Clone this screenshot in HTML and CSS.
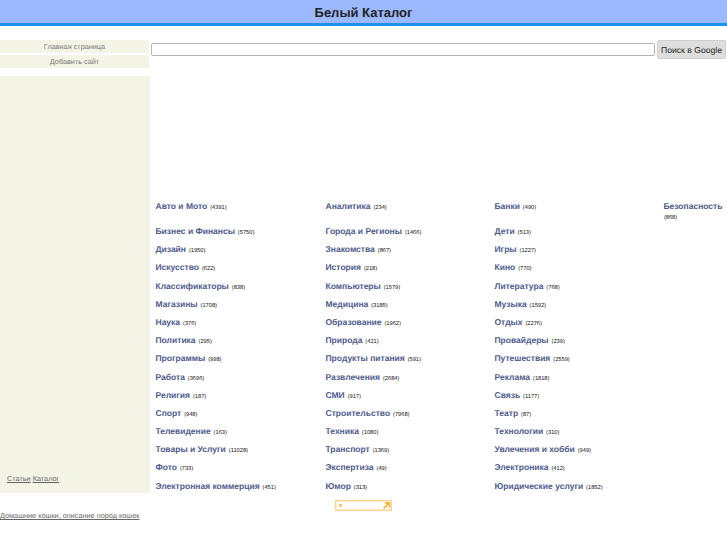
FILE: index.html
```html
<!DOCTYPE html>
<html lang="ru">
<head>
<meta charset="utf-8">
<title>Белый Каталог</title>
<link rel="stylesheet" href="styles.css">
</head>
<body>
<header class="top"><h1 class="title">Белый Каталог</h1></header>
<div class="main">
  <aside class="side">
    <nav class="nav">
      <a class="nav-item" href="#">Главная страница</a>
      <a class="nav-item" href="#">Добавить сайт</a>
    </nav>
    <div class="panel">
      <div class="panel-links"><a href="#">Статьи</a> <a href="#">Каталог</a></div>
    </div>
  </aside>
  <div class="content">
    <form class="search">
      <input class="search-input" type="text">
      <button class="search-btn" type="button">Поиск в Google</button>
    </form>
    <div class="cats">
      <div class="cat"><a href="#">Авто и Мото</a> <small>(4391)</small></div>
      <div class="cat"><a href="#">Аналитика</a> <small>(234)</small></div>
      <div class="cat"><a href="#">Банки</a> <small>(490)</small></div>
      <div class="cat"><a href="#">Безопасность</a> <small>(868)</small></div>
      <div class="cat"><a href="#">Бизнес и Финансы</a> <small>(5750)</small></div>
      <div class="cat"><a href="#">Города и Регионы</a> <small>(1466)</small></div>
      <div class="cat"><a href="#">Дети</a> <small>(513)</small></div><div></div>
      <div class="cat"><a href="#">Дизайн</a> <small>(1950)</small></div>
      <div class="cat"><a href="#">Знакомства</a> <small>(867)</small></div>
      <div class="cat"><a href="#">Игры</a> <small>(1227)</small></div><div></div>
      <div class="cat"><a href="#">Искусство</a> <small>(622)</small></div>
      <div class="cat"><a href="#">История</a> <small>(218)</small></div>
      <div class="cat"><a href="#">Кино</a> <small>(770)</small></div><div></div>
      <div class="cat"><a href="#">Классификаторы</a> <small>(838)</small></div>
      <div class="cat"><a href="#">Компьютеры</a> <small>(1579)</small></div>
      <div class="cat"><a href="#">Литература</a> <small>(768)</small></div><div></div>
      <div class="cat"><a href="#">Магазины</a> <small>(1708)</small></div>
      <div class="cat"><a href="#">Медицина</a> <small>(3185)</small></div>
      <div class="cat"><a href="#">Музыка</a> <small>(1592)</small></div><div></div>
      <div class="cat"><a href="#">Наука</a> <small>(376)</small></div>
      <div class="cat"><a href="#">Образование</a> <small>(1962)</small></div>
      <div class="cat"><a href="#">Отдых</a> <small>(2276)</small></div><div></div>
      <div class="cat"><a href="#">Политика</a> <small>(295)</small></div>
      <div class="cat"><a href="#">Природа</a> <small>(421)</small></div>
      <div class="cat"><a href="#">Провайдеры</a> <small>(239)</small></div><div></div>
      <div class="cat"><a href="#">Программы</a> <small>(998)</small></div>
      <div class="cat"><a href="#">Продукты питания</a> <small>(591)</small></div>
      <div class="cat"><a href="#">Путешествия</a> <small>(2559)</small></div><div></div>
      <div class="cat"><a href="#">Работа</a> <small>(3696)</small></div>
      <div class="cat"><a href="#">Развлечения</a> <small>(2684)</small></div>
      <div class="cat"><a href="#">Реклама</a> <small>(1818)</small></div><div></div>
      <div class="cat"><a href="#">Религия</a> <small>(187)</small></div>
      <div class="cat"><a href="#">СМИ</a> <small>(917)</small></div>
      <div class="cat"><a href="#">Связь</a> <small>(1177)</small></div><div></div>
      <div class="cat"><a href="#">Спорт</a> <small>(948)</small></div>
      <div class="cat"><a href="#">Строительство</a> <small>(7968)</small></div>
      <div class="cat"><a href="#">Театр</a> <small>(87)</small></div><div></div>
      <div class="cat"><a href="#">Телевидение</a> <small>(163)</small></div>
      <div class="cat"><a href="#">Техника</a> <small>(1080)</small></div>
      <div class="cat"><a href="#">Технологии</a> <small>(310)</small></div><div></div>
      <div class="cat"><a href="#">Товары и Услуги</a> <small>(11028)</small></div>
      <div class="cat"><a href="#">Транспорт</a> <small>(1369)</small></div>
      <div class="cat"><a href="#">Увлечения и хобби</a> <small>(949)</small></div><div></div>
      <div class="cat"><a href="#">Фото</a> <small>(733)</small></div>
      <div class="cat"><a href="#">Экспертиза</a> <small>(49)</small></div>
      <div class="cat"><a href="#">Электроника</a> <small>(412)</small></div><div></div>
      <div class="cat"><a href="#">Электронная коммерция</a> <small>(451)</small></div>
      <div class="cat"><a href="#">Юмор</a> <small>(313)</small></div>
      <div class="cat"><a href="#">Юридические услуги</a> <small>(1852)</small></div><div></div>
    </div>
  </div>
</div>
<div class="badge-row">
  <a class="badge" href="#"><span class="badge-mark"></span>
    <svg class="badge-arrow" width="7" height="7" viewBox="0 0 7 7"><path d="M0.5 6.5L6 1M2 1h4.5v4.5" fill="none" stroke="#f7a818" stroke-width="1.5"/></svg>
  </a>
</div>
<a class="foot-link" href="#">Домашние кошки, описание пород кошек</a>
</body>
</html>
```
FILE: styles.css
```css
html, body { margin: 0; padding: 0; background: #fff; }
body { font-family: "Liberation Sans", Arial, sans-serif; font-size: 9px; color: #000; height: 545px; overflow: hidden; text-rendering: geometricPrecision; }
a { color: #666; }
.top { height: 23px; background: #9db9fd; border-bottom: 3px solid #1e90f2; text-align: center; }
.title { margin: 0; font-size: 13px; line-height: 25px; font-weight: bold; color: #222; opacity: .99; }
.main { display: flex; margin-top: 14px; }
.side { width: 150px; flex: none; opacity: .99; }
.nav { display: flex; flex-direction: column; gap: 2px; width: 149px; }
.nav-item { height: 13px; line-height: 13px; background: #f4f4e6; text-align: center; color: #777; text-decoration: none; font-size: 7.3px; }
.panel { margin-top: 8px; height: 417px; background: #f4f4e6; display: flex; align-items: flex-end; padding: 0 0 9px 7px; box-sizing: border-box; }
.panel-links { font-size: 7.3px; line-height: 10px; }
.content { flex: 1; min-width: 0; opacity: .99; }
.search { display: flex; align-items: center; gap: 2px; padding-left: 1px; height: 19px; }
.search-input { width: 504px; height: 13px; box-sizing: border-box; padding: 0; margin: 0; border: 1px solid #b4b4b4; border-radius: 2px; background: #fff; }
.search-btn { width: 69px; height: 19px; margin: 0; padding: 0; border: 1px solid #cfcfcf; border-radius: 2px; background: #dedede; font: 8.6px "Liberation Sans", sans-serif; text-rendering: geometricPrecision; color: #222; white-space: nowrap; }
.cats { display: grid; grid-template-columns: 170px 169px 169px 63.5px; grid-template-rows: 25px repeat(15, 18.2px); margin-top: 142px; padding-left: 5.5px; }
.cat { line-height: 10px; }
.cat a { color: #4e5a8c; font-weight: bold; font-size: 8.5px; text-decoration: none; }
.cat small { font-size: 5.7px; color: #111; margin-left: .4px; }
.badge-row { margin-top: 1px; text-align: center; height: 11px; font-size: 0; }
.badge { display: inline-flex; box-sizing: border-box; width: 57px; height: 11px; border: 1px solid #fdd28a; outline: 1px solid #ffeccb; outline-offset: -2px; align-items: center; justify-content: space-between; padding: 0 1px 0 3px; text-decoration: none; }
.badge-mark { display: block; width: 3px; height: 3px; background: #fcc868; }
.badge-arrow { display: block; }
.foot-link { display: block; line-height: 10px; font-size: 7.3px; padding-top: .5px; opacity: .99; }
```
